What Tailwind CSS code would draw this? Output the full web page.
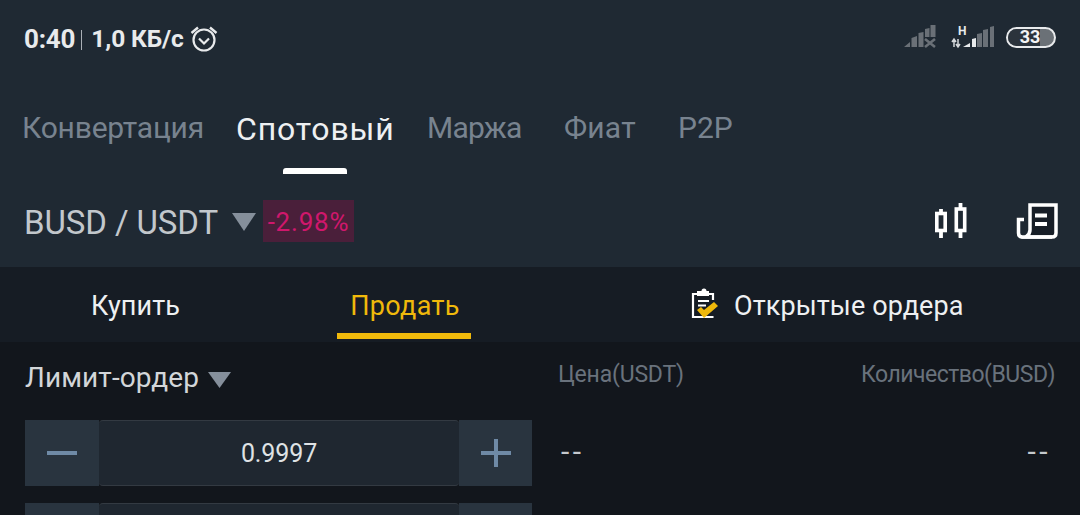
<!doctype html>
<html lang="ru">
  <head>
    <meta charset="UTF-8" />
    <title>Спотовый</title>
    <script src="https://cdn.jsdelivr.net/npm/@tailwindcss/browser@4"></script>
  </head>
  <body class="w-[1080px] h-[515px] overflow-hidden bg-[#12161c] font-['Roboto',sans-serif]">
    <!-- top section -->
    <div class="h-[267px] bg-[#1f2933] flex flex-col">
      <!-- status bar -->
      <div class="h-[78px] shrink-0 pl-[24px] pr-[24px] flex items-center justify-between text-[#e8eaec]">
        <div class="flex items-center font-bold h-[40px]">
          <span class="text-[26px] tracking-[-0.2px]">0:40</span>
          <span class="w-px h-[20px] bg-[#aab0b6] ml-[6px] mr-[9px] mt-[2px]"></span>
          <span class="text-[24.5px] tracking-[-0.1px]">1,0 КБ/с</span>
          <svg class="ml-[6px]" width="28" height="28" viewBox="0 0 28 28" fill="none" stroke="#e8eaec" stroke-width="2.2">
            <circle cx="14" cy="15" r="10.500" />
            <path d="M9 13.500 14 18.500l5-5" />
            <path d="M1.500 8l6.500-5.500M26.500 8 20 2.500" stroke-width="2.400" />
          </svg>
        </div>
        <div class="flex items-center mb-[4px]">
          <svg width="34" height="24" viewBox="0 0 34 24" fill="#6a7077">
            <path d="M0 22l6-5v5zM7.500 22V13l5.500-2v11zM14.500 22V8l5-1v15zM21 12V4l4.500-1v9zM26.500 12V0h5v12z" />
            <path d="M21 14l10 8M31 14l-10 8" stroke="#6a7077" stroke-width="2.600" />
          </svg>
          <div class="relative ml-[13px] w-[44px] h-[24px]">
            <span class="absolute left-[7px] top-0 text-[12px] leading-none font-bold text-[#e8eaec]">H</span>
            <svg class="absolute left-0 top-0" width="44" height="24" viewBox="0 0 44 24">
              <path d="M3 22v-8M1 17l2-3 2 3M7 14v8M5 19l2 3 2-3" stroke="#d5d8db" stroke-width="1.500" fill="none" />
              <path d="M12 22l7-4v4zM21 22v-8l4-1v9z" fill="#e8eaec" />
              <path d="M26 22V9l5-1v14zM32 22V5l5-1v18zM39 22V2l4-1v21z" fill="#6a7077" />
            </svg>
          </div>
          <div class="relative ml-[11px] w-[50px] h-[21px] rounded-full border-2 border-[#e8eaec] overflow-hidden bg-[#6b7177] flex items-center justify-center">
            <span class="absolute inset-y-0 left-0 w-[32px] bg-[#2b333c]"></span>
            <span class="relative font-bold text-[18px] leading-none text-[#f2f3f4] mr-[2px]">33</span>
          </div>
        </div>
      </div>
      <!-- main tabs -->
      <div class="h-[96px] shrink-0 flex pl-[22px] text-[30px] text-[#78838f]">
        <span class="mt-[27px] w-[214px] tracking-[-0.2px]">Конвертация</span>
        <div class="w-[191px] flex flex-col items-start">
          <span class="mt-[27px] text-[#eef0f2] text-[32px] tracking-[0.85px]">Спотовый</span>
          <span class="ml-[47px] mt-[15px] w-[64px] h-[6px] shrink-0 bg-white rounded-t-[3px]"></span>
        </div>
        <span class="mt-[27px] w-[137px] tracking-[-0.8px]">Маржа</span>
        <span class="mt-[27px] w-[114px] tracking-[0.2px]">Фиат</span>
        <span class="mt-[27px]">P2P</span>
      </div>
      <!-- pair row -->
      <div class="flex-1 flex items-start pl-[24px] pr-[22px]">
        <span class="mt-[25px] text-[33px] leading-[48px] tracking-[-0.1px] text-[#c2c7cc]">BUSD / USDT</span>
        <svg class="ml-[14px] mt-[39px]" width="24" height="18" viewBox="0 0 24 18"><path d="M0 0h24L12 18z" fill="#858f9b" /></svg>
        <span class="ml-[7px] mt-[26px] w-[91px] h-[42px] bg-[#4a1f3a] text-[#d0176c] text-[26px] leading-[44px] text-center tracking-[0.8px]">-2.98%</span>
        <svg class="ml-auto mt-[29px]" width="32" height="36" viewBox="0 0 32 36" fill="none" stroke="#fff">
          <path d="M6 6v29M25.500 0v35" stroke-width="3.800" />
          <rect x="1.800" y="10.500" width="8.400" height="17" fill="#1f2933" stroke-width="3.600" />
          <rect x="21.300" y="6" width="8.400" height="21.500" fill="#1f2933" stroke-width="3.600" />
        </svg>
        <svg class="ml-[49px] mt-[29px]" width="42" height="36" viewBox="0 0 42 36" fill="none" stroke="#fff" stroke-width="3.500">
          <path d="M14 2H40V30q0 4-4 4H10q4-3 4-7z" fill="#171e27" />
          <path d="M8 16.500H2.500V30q0 4 4 4H36" />
          <path d="M19 12.500h12M19 21h12" stroke-width="3.800" />
        </svg>
      </div>
    </div>
    <!-- sub tabs -->
    <div class="h-[75px] bg-[#161c24] flex text-[27px] tracking-[0.1px]">
      <div class="w-[337px] pl-[91px] pt-[19px] text-[#eef0f2]">Купить</div>
      <div class="w-[134px] flex flex-col items-center pt-[19px] pl-[2px] text-[#f0b90b]">
        <span class="leading-[40px] tracking-[0.3px]">Продать</span>
        <span class="-ml-[2px] w-[134px] h-[6px] mt-[7px] bg-[#f0b90b]"></span>
      </div>
      <div class="flex pl-[219px] pt-[19px] text-[#eef0f2]">
        <svg class="-mt-[1px] shrink-0" width="28" height="34" viewBox="0 0 28 34" fill="none">
          <path d="M7 9H3V32H23.500M23 15V9H18" stroke="#fff" stroke-width="2.200" />
          <path d="M7 11V6h4.500a2.500 2.500 0 0 1 5 0H19v5z" fill="#fff" />
          <path d="M8 16h11M8 20.500h8" stroke="#fff" stroke-width="2" />
          <path d="M7 25l4-3 3 3 10-8 4 4-14 12z" fill="#f0b90b" />
        </svg>
        <span class="ml-[16px] leading-[40px]">Открытые ордера</span>
      </div>
    </div>
    <!-- order form -->
    <div class="flex h-[173px] overflow-hidden">
      <div class="w-[532px] pl-[25px] shrink-0">
        <div class="h-[78px] flex items-start">
          <span class="mt-[16px] text-[28px] leading-[40px] tracking-[0.1px] text-[#d3d6d9]">Лимит-ордер</span>
          <svg class="ml-[9px] mt-[30px]" width="23" height="16" viewBox="0 0 23 16"><path d="M0 0h23L11.500 16z" fill="#858f9b" /></svg>
        </div>
        <div class="flex h-[66px]">
          <div class="w-[74px] bg-[#29343f] flex items-center justify-center">
            <span class="w-[30px] h-[4px] bg-[#6f8aa6]"></span>
          </div>
          <div class="w-[360px] bg-[#1f2730] border-y border-[#333a42] rounded-[4px] text-center text-[25px] leading-[66px] tracking-[-0.1px] text-[#dfe2e4]">0.9997</div>
          <div class="w-[73px] bg-[#29343f] flex items-center justify-center">
            <svg width="30" height="28" viewBox="0 0 30 28"><path d="M0 14h30M15 0v28" stroke="#6f8aa6" stroke-width="4" /></svg>
          </div>
        </div>
        <div class="flex h-[66px] mt-[17px]">
          <div class="w-[74px] bg-[#29343f]"></div>
          <div class="w-[360px] bg-[#1f2730] border-y border-[#333a42] rounded-[4px]"></div>
          <div class="w-[73px] bg-[#29343f]"></div>
        </div>
      </div>
      <div class="flex-1 pr-[25px] pl-[26px] text-[#69727c]">
        <div class="flex justify-between pt-[16px] text-[23px] leading-[34px]">
          <span class="tracking-[-0.2px]">Цена(USDT)</span>
          <span class="tracking-[-0.5px]">Количество(BUSD)</span>
        </div>
        <div class="flex justify-between mt-[38px] pr-[4px] pl-[3px] text-[30px] leading-[44px] tracking-[3.5px] text-[#c5c9cd]">
          <span>--</span>
          <span>--</span>
        </div>
      </div>
    </div>
  </body>
</html>
